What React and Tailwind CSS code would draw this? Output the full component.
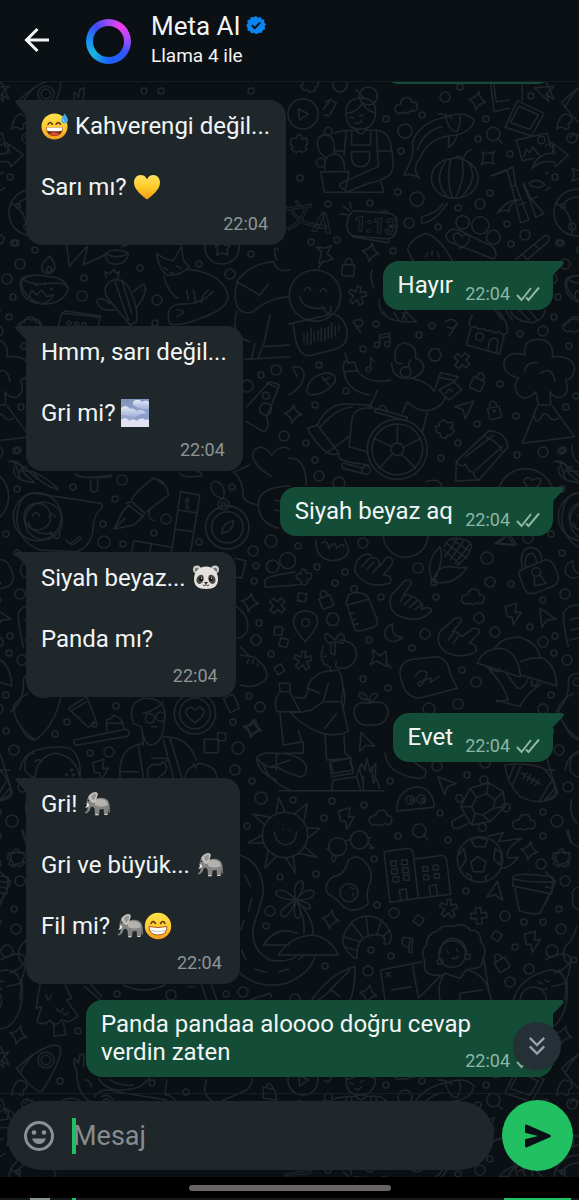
import { useState } from 'react';

const circles = [
    [340, 85, 7], [445, 97, 5], [460, 87, 3], [531, 96, 3], [422, 115, 3], [386, 119, 3], [405, 131, 7], [486, 119, 3],
    [478, 139, 3], [401, 151, 3], [572, 138, 5], [510, 154, 3], [300, 178, 3], [555, 177, 3], [398, 192, 3], [417, 199, 7],
    [490, 193, 3], [480, 204, 5], [458, 208, 3], [328, 204, 3], [370, 203, 3], [409, 223, 5], [438, 227, 3], [507, 224, 3],
    [525, 235, 5], [511, 244, 3], [311, 242, 3], [337, 240, 3], [393, 251, 3], [559, 243, 3], [558, 297, 3], [554, 317, 3],
    [376, 324, 3], [432, 326, 3], [419, 335, 3], [363, 349, 3], [520, 334, 3], [543, 331, 5], [569, 346, 3], [319, 365, 3],
    [346, 391, 3], [315, 405, 3], [500, 384, 3], [576, 396, 3], [566, 407, 3], [516, 416, 3], [477, 424, 3], [306, 443, 3],
    [315, 460, 3], [458, 443, 3], [441, 458, 3], [517, 455, 3], [543, 452, 5], [561, 451, 3], [319, 476, 5], [339, 483, 6],
    [298, 546, 3], [363, 543, 5], [528, 538, 5], [562, 553, 3], [487, 558, 6], [253, 551, 5], [256, 566, 3], [254, 581, 3],
    [317, 567, 3], [345, 572, 3], [335, 583, 3], [418, 568, 5], [490, 582, 5], [511, 584, 3], [565, 594, 5], [543, 600, 3],
    [381, 597, 3], [436, 597, 3], [479, 618, 5], [530, 627, 3], [495, 632, 5], [425, 634, 5], [259, 623, 3], [256, 640, 5],
    [369, 640, 3], [412, 648, 3], [543, 642, 5], [555, 636, 3], [554, 653, 3], [567, 660, 5], [271, 654, 3], [462, 670, 3],
    [476, 682, 5], [363, 679, 3], [388, 688, 3], [458, 704, 5], [429, 709, 6], [551, 695, 3], [543, 709, 5], [249, 696, 3],
    [260, 707, 5], [559, 750, 5], [437, 766, 5], [485, 763, 5], [252, 781, 3], [261, 798, 6], [293, 800, 3], [332, 801, 3],
    [364, 805, 3], [390, 781, 3], [467, 775, 3], [568, 787, 5], [440, 813, 3], [543, 812, 3], [557, 821, 6], [324, 818, 3],
    [247, 826, 3], [398, 836, 3], [448, 840, 3], [543, 836, 3], [541, 864, 5], [374, 859, 3], [316, 874, 3], [280, 877, 3],
    [565, 881, 5], [466, 891, 3], [377, 905, 3], [270, 911, 5], [394, 913, 5], [505, 916, 5], [559, 909, 3], [524, 922, 3],
    [543, 922, 3], [561, 929, 5], [266, 926, 3], [371, 950, 3], [391, 956, 3], [515, 947, 3], [552, 951, 6], [325, 966, 3],
    [368, 971, 5], [529, 969, 5], [510, 982, 5], [295, 999, 5], [243, 992, 5], [20, 264, 5], [35, 250, 3], [16, 243, 3],
    [84, 278, 3], [82, 296, 5], [140, 268, 3], [157, 300, 5], [199, 264, 3], [230, 274, 5], [251, 254, 3], [552, 279, 5],
    [155, 323, 3], [276, 370, 5], [261, 375, 3], [247, 386, 6], [284, 436, 5], [18, 450, 3], [73, 487, 3], [122, 480, 5],
    [115, 499, 3], [17, 489, 3], [103, 524, 3], [104, 542, 6], [123, 544, 3], [154, 533, 3], [166, 519, 5], [232, 487, 3],
    [199, 542, 3], [551, 534, 3], [271, 541, 6], [116, 706, 3], [67, 722, 3], [55, 734, 3], [90, 753, 3], [109, 752, 5],
    [551, 731, 3], [233, 722, 3], [238, 748, 6], [235, 770, 5], [144, 91, 3], [161, 91, 3], [251, 91, 3], [78, 1031, 3],
    [117, 994, 3], [171, 995, 5], [226, 994, 3], [60, 115, 3], [152, 117, 3], [186, 126, 3],
];

// Small motifs drawn around their own centre
const motifs = {
    spark: 'M0 -28Q5 -6 26 0Q6 6 0 28Q-6 6 -26 0Q-5 -6 0 -28Z',
    cloud: 'M-22 20Q-40 12 -30 -4Q-18 -10 -14 -8Q-10 -28 10 -24Q20 -20 20 -8Q38 -8 34 10Q28 24 14 16Q0 26 -8 18Z',
    cross: 'M-8 -24H8V-8H24V8H8V24H-8V8H-24V-8H-8Z',
    bolt: 'M-22 -22L12 -32L8 -4L26 -6L2 32L-2 8L-16 8Z',
    plane: 'M-20 -28L28 6L0 8L-14 30Z',
    square: 'M-12 -12H12V12H-12Z',
    lock: 'M-18 -8H18V22Q18 26 14 26H-14Q-18 26 -18 22ZM-10 -8V-20Q0 -34 10 -20V-8',
    puzzle: 'M-24 -16L-8 -18Q-6 -30 4 -28Q12 -22 8 -14L22 -18L26 0Q14 4 24 16L8 26Q2 14 -8 26L-24 16Q-12 6 -26 2Z',
    heart: 'M0 26Q-32 4 -26 -12Q-14 -30 0 -10Q14 -30 26 -12Q32 4 0 26Z',
    hexagon: 'M-10 -18H10L20 0L10 18H-10L-20 0Z',
    asterisk: 'M-5 -28H7L6 -10L22 -16L27 -5L12 3L22 18L12 26L1 12L-10 26L-20 18L-10 3L-27 -5L-22 -16L-6 -10Z',
    moon: 'M-6 -28Q-34 -18 -28 10Q-8 38 26 12Q-8 14 -6 -28Z',
    pin: 'M-14 -34L2 -10L24 -18L14 26L-12 2L-32 8L-16 -14ZM14 12L26 34',
    lens: 'M20 0A20 20 0 1 1 -20 0A20 20 0 1 1 20 0M13 14L26 28',
    smile: 'M-34 -12Q-24 -34 -14 -14M14 -12Q24 -34 34 -14M-46 8Q-30 48 34 34M22 30L40 50Q56 48 50 28',
};

// Each scene has its own origin and is drawn at three times its final size
const scenes = [
    {
        x: 289, y: 70,
        rounds: [[42, 132, 45], [238, 78, 27], [118, 184, 12], [95, 278, 13], [757, 210, 11], [865, 428, 70], [822, 408, 7], [850, 470, 10], [521, 457, 20], [574, 466, 26], [613, 502, 21], [78, 677, 77]],
        paths: [
            'M28 116L58 132L32 150Z',
            'M200 58L222 80M172 140Q165 85 216 84Q262 85 260 130Q255 175 215 178Q175 178 172 140M176 130Q205 125 220 100Q235 125 260 128M198 158Q208 166 218 152M182 142l12 2M212 138l10-3',
            'M200 178Q215 205 232 178M135 190Q150 182 200 181M235 181H262Q300 184 306 230Q318 280 308 305Q300 325 240 340L175 365M188 186V225H245V186M188 245H242V265Q238 290 215 290Q190 290 188 265ZM172 185L165 255M262 185L268 290L165 335Q140 345 165 358M262 243H306M135 243H165',
            'M95 305H180L168 367H106ZM168 367H285L275 335M108 300Q100 255 138 252Q168 255 166 300M108 262Q80 240 86 210Q100 185 125 200Q140 215 135 250',
            'M103 118L125 88L142 100L120 138L105 134M108 95l14-5',
            'M345 315Q380 250 370 220Q385 160 470 140Q530 120 555 150Q550 185 500 195Q420 200 395 260Q365 300 393 325Q370 310 345 315M470 140Q480 185 505 185Q520 150 510 135M480 200L478 232Q495 225 505 195M448 132Q470 130 490 145M385 240Q405 180 460 170',
            'M427 325A70 60 0 1 0 567 325A70 60 0 1 0 427 325M470 275Q430 330 475 380M485 270Q470 330 490 383M520 270Q530 325 500 383M540 280Q570 330 515 382M480 270L510 258L535 275M525 262Q528 245 545 240M460 378L495 385M462 400Q445 430 398 440V460Q440 455 475 400',
            'M605 40L615 125L660 115M615 45L622 95L660 90M700 90V42M685 92L765 130L728 198L648 172ZM690 108L748 135L722 178L665 158Z',
            'M700 272L682 210L775 190L785 232M700 272L735 265M705 260L712 238L722 248L732 232L750 255M730 295Q745 250 790 250L795 222L838 255L800 290L795 275Q750 270 730 295',
            'M605 318L672 292L680 345L720 450L695 458L668 350L655 302L605 318M680 345L665 350M705 340L725 385L765 430L740 442L722 388L702 345M720 340Q745 320 768 345Q745 360 722 345M625 430Q650 390 690 390Q660 400 660 425Q640 415 625 430M690 405L712 398M722 390L745 380',
            'M800 400Q850 420 850 495M822 405Q840 370 920 385',
            'M200 422L300 430Q328 436 324 465L320 490Q310 508 290 506L195 498Q172 490 174 462Q178 424 200 422M190 500L298 518L300 507M275 426Q290 415 298 430M155 432L175 434M162 408L180 422M183 396L187 415',
            'M470 500Q480 470 510 480L610 530Q630 550 615 568L480 515ZM515 535Q480 500 500 490Q512 485 518 500Q530 485 542 500Q545 520 515 535',
            'M372 572L356 540Q360 510 410 490Q450 500 490 572M410 560l8-12M428 555l2-12M450 560l-4-12M680 568L770 495Q785 500 778 515L715 568M700 552l12 14M735 523l15 14',
            'M250 600Q240 620 255 655M828 640Q830 620 880 615M828 640Q830 690 880 700M270 690Q270 720 285 735M620 722L640 750M650 722L670 750M350 722L340 750',
        ],
        marks: [['cloud', 350, 108, -10], ['spark', 565, 92, 10], ['lens', 613, 192, 0], ['spark', 597, 264, 45], ['puzzle', 30, 222, 0], ['plane', 770, 62, -40], ['asterisk', 205, 677, 10], ['lock', 178, 592, 5], ['pin', 105, 555, 60], ['spark', 245, 547, 10], ['puzzle', 62, 40, 20], ['spark', 868, 314, 45], ['smile', 78, 677, 5]],
    },
    {
        x: 289, y: 310,
        rounds: [[264, 105, 8], [295, 102, 8], [238, 178, 7], [572, 80, 12], [325, 418, 90], [325, 418, 76], [325, 418, 19], [350, 186, 16], [231, 480, 13], [710, 560, 84], [616, 303, 3], [880, 620, 72], [880, 620, 40]],
        paths: [
            'M0 42L130 12Q170 20 175 70Q175 105 140 118L60 137Q30 135 20 90L12 40',
            'M45 72v24M55 68v34M66 55v48M76 68v26M87 62v28M97 54v38M108 58v34M118 50v34M128 40v44M139 50v24M150 46v16',
            'M272 105V75L303 70V100M272 84L303 79M245 178V142L256 155M192 35L215 68M192 35Q215 20 222 38Q222 50 205 50M470 35Q490 20 505 40L480 78M475 50Q490 62 500 45',
            'M285 5Q290 30 340 35L382 35L350 5M315 8l15 25M340 8l15 25M665 5Q680 35 730 38Q765 30 768 0M690 0l30 30M720 0l25 30',
            'M550 15Q540 30 540 45Q550 55 560 50Q570 62 582 55Q595 66 605 60Q615 72 630 65Q645 80 655 68Q660 40 630 5M545 55L532 105L632 132L645 78M597 118L602 92Q612 78 627 90L622 128',
            'M740 245Q700 285 680 240Q675 215 690 205Q640 190 645 155Q660 120 708 135Q700 90 748 88Q795 90 790 140Q850 135 857 175Q855 205 830 210Q845 250 815 262Q795 265 783 245M707 185Q710 155 745 158M755 190Q790 165 798 215M740 245L748 285H785L783 245',
            'M745 288L700 400L857 380L790 288M735 315Q740 345 755 325Q765 300 780 320Q790 335 808 325',
            'M205 182Q235 225 305 210M165 185Q170 240 240 255M168 130L178 160L195 155M165 185Q158 160 172 152M165 185L205 182L198 160M320 150Q310 110 345 98Q385 105 380 145Q410 155 402 180Q390 200 365 205Q310 210 308 160M318 150Q325 165 340 160M365 150Q355 160 362 170',
            'M265 240Q255 270 240 290M355 275L340 310M355 275Q390 310 425 300Q460 290 470 260M365 205Q420 215 435 245M435 245L455 188L508 200L500 212L450 202M450 240L495 215L518 240L480 270ZM470 250Q485 230 490 245',
            'M258 295L355 322L352 332L256 305ZM270 295Q280 275 295 300M190 320Q200 290 250 295M85 345Q110 290 160 282Q220 280 250 290M55 355L85 345L150 430Q110 450 55 355M95 350Q140 295 190 290M190 320L180 410L235 425M110 430L180 380M150 430Q140 450 190 458L240 465M165 460L225 475M160 475L220 490M160 460V475M415 308L400 365',
            'M325 400V345M308 410L255 385M313 430L270 475M337 432L380 475M342 412L395 385',
            'M500 513L502 455L600 362Q650 365 657 410L570 510ZM502 455Q515 475 530 462Q540 490 555 485Q550 500 570 510M530 440L615 375M560 480L640 410M585 378Q630 395 640 425',
            'M55 235Q60 200 110 188Q145 190 138 215Q110 255 65 255Q50 250 55 235M100 200L120 225M122 202L104 212M0 255Q45 230 45 190Q40 165 10 172M10 172L25 200M0 445Q50 440 52 525',
            'M410 515Q455 500 460 535M795 455Q830 445 840 490Q870 515 870 518Q800 510 810 470M850 405Q845 440 870 460M728 540Q695 515 710 505Q722 500 730 512Q740 500 755 508Q760 525 728 540',
        ],
        marks: [['hexagon', 438, 134, 0], ['cross', 519, 152, 40], ['lock', 568, 215, 25], ['lock', 615, 300, -12], ['plane', 530, 298, 80], ['puzzle', 468, 357, 50], ['spark', 12, 312, 5], ['cloud', 855, 45, 0], ['plane', 652, 690, 150]],
    },
    {
        x: 240, y: 540,
        rounds: [[497, -15, 67], [98, 79, 19], [143, 62, 24], [342, 147, 10], [197, 248, 12], [889, 96, 13], [582, 127, 9], [1012, 427, 12]],
        paths: [
            'M228 0Q225 55 275 62Q320 60 326 30L315 0M245 10Q262 -5 268 28M270 20Q285 0 290 26M295 22Q308 5 312 20',
            'M580 125Q550 70 600 20Q615 60 580 125Q590 70 645 82Q670 85 682 82Q640 140 580 125M612 20Q620 -5 650 -5Q695 0 695 20Q680 60 650 75M612 30L660 72M620 10L680 55M640 0L690 35M615 50L650 0M630 60L672 0M645 70L692 10',
            'M75 138V120Q80 108 165 96M75 142L180 134M185 88Q200 85 198 100Q215 95 215 110Q212 120 202 118Q205 135 192 135Q180 132 183 120Q168 118 168 108Q172 98 183 102Z',
            'M345 95Q345 50 380 42Q395 40 395 55Q420 50 418 80L440 52Q460 50 458 70L430 105Q460 105 450 130Q380 150 345 95M365 80L388 55M382 88L402 65M398 98L416 78',
            'M318 190L325 165Q350 150 378 165L388 177L320 196ZM322 196L345 270Q350 278 400 262Q415 255 412 240L388 180M328 222l15-4M334 240l12-3M340 255l15-4',
            'M470 225Q440 200 455 165L495 122Q512 115 515 130L490 165Q520 160 548 195L545 207Q575 198 574 213Q540 255 470 225M480 185L495 165M492 195L515 172M508 202L532 182M525 208L545 195',
            'M615 335Q585 310 600 275L645 235Q660 228 665 242L638 275Q650 272 665 290L700 265Q720 262 718 278L688 308Q715 315 708 335Q660 360 615 335M625 300L640 280M640 310L655 288',
            'M196 305Q160 265 160 245Q165 212 197 212Q232 215 233 245Q232 265 196 305Z',
            'M850 140L838 105Q835 92 850 87L915 60Q940 55 955 110Q955 130 940 138L885 160Q860 165 850 140M848 88Q835 30 870 22Q905 25 905 62M858 84Q850 45 873 40Q888 42 890 70M882 108L885 138L918 130L900 105',
            'M480 400Q480 365 520 358L590 350Q625 355 630 400L652 445L540 474Q490 475 480 400M525 410Q545 380 560 398Q560 420 540 438Q520 430 555 420Q580 405 570 428L598 410',
            'M712 370Q730 325 785 325Q835 335 842 412ZM765 322Q790 290 840 292Q895 310 900 352M842 365Q870 350 910 355Q950 380 950 438L845 405M740 380Q790 430 805 480L770 485M770 480L840 500Q850 470 905 430M800 402L832 445Q850 450 865 415M740 380Q760 395 775 395L778 385M875 420V435Q885 445 895 425',
            'M265 310Q245 285 262 280L285 300L300 280Q320 285 310 310L285 305ZM272 308V340L285 345V310M300 300Q350 305 350 345Q340 385 305 385Q280 385 290 365M250 318L243 350L252 372L270 380L272 395M252 350l8-2',
            'M250 395Q210 410 202 445L240 460M250 395L295 390Q315 420 305 485L325 575Q290 590 245 580Q180 555 150 515L185 517L215 510L250 485H305M265 430L250 485M205 450L195 475L165 472M308 440Q320 470 310 500M290 520L255 565',
            'M118 430H150V455H120ZM118 460Q100 480 110 515H180L150 458M120 520L130 615M175 570L185 605L130 615L190 605V640L130 640M255 585L260 660L335 655L315 640L312 585M270 665L330 655L340 690L280 700ZM50 655Q60 635 110 640Q180 640 200 680Q200 710 180 710Q140 700 110 680Q80 690 50 655Q55 700 110 720M95 680L150 660M110 640L108 690',
            'M388 490Q340 480 342 520Q350 560 390 555Q440 560 445 515Q440 475 388 490L378 465Q352 450 358 470Q370 480 380 480M388 485Q390 455 412 462Q410 480 388 485',
            'M0 435Q50 450 80 415Q85 380 40 350L0 345M0 320L15 335L30 350M22 370l4-12M38 372l2-14M52 378l2-10',
            'M985 320Q970 260 970 220Q980 195 1017 195M990 240l27-8M995 270l20-5M990 300l27-6M948 515Q990 480 985 420Q990 400 1017 400M975 555Q990 595 1017 600M975 690Q985 640 1017 640',
            'M350 705L365 670L375 690L380 655L390 695L408 670L405 715M435 640Q440 700 530 715Q560 720 557 690L520 665',
        ],
        marks: [['cross', 112, 197, 42], ['spark', 30, 187, 10], ['square', 186, 172, 8], ['lock', 256, 178, -20], ['hexagon', 278, 238, 0], ['square', 115, 273, 10], ['square', 131, 308, 15], ['moon', 463, 280, 0], ['pin', 420, 358, -15], ['asterisk', 188, 362, 5], ['square', 118, 388, -30], ['cloud', 698, 172, 0], ['bolt', 818, 222, 0], ['plane', 920, 232, 0], ['moon', 1005, 90, 0], ['spark', 36, 565, 10], ['plane', 378, 608, 10], ['plane', 792, 2, 150]],
    },
    {
        x: 240, y: 760,
        rounds: [[135, 225, 68], [293, 260, 27], [358, 240, 27], [511, 120, 13], [544, 118, 13], [732, 60, 12], [658, 115, 11], [798, 143, 12], [727, 202, 12], [720, 298, 68], [327, 398, 27], [637, 582, 40], [600, 605, 8], [683, 590, 8], [880, 722, 40], [516, 120, 5], [549, 120, 5], [1002, 600, 8]],
        paths: [
            'M118 92H432M70 10Q80 60 150 90M270 10L275 50L340 40L330 5M280 60L350 50L362 90M280 60L275 88M370 50V90M395 20L400 70L410 55L418 85M357 25L368 60',
            'M108 160L116 112L135 155M165 160L202 130L192 180M200 205L240 205L203 235M192 258L230 292L175 280M160 290L166 338L138 294M108 290L75 325L85 270M70 250L25 248L68 225M75 195L38 162L92 172M103 215Q110 255 140 254Q168 250 170 215M128 208h2M148 211h2',
            'M318 242L332 238M268 262l-10 6M280 285Q270 300 282 306Q288 300 288 288M385 235L395 232M385 250L402 264L388 264',
            'M470 153Q470 90 530 80Q580 85 583 142Z',
            'M662 140L690 85L745 68L790 95L795 140L750 185L695 195ZM695 140L710 112L740 100L765 120L760 145L728 165L705 160ZM690 85L710 112M745 68L740 100M790 95L765 120M795 140L760 145M750 185L728 165M695 195L705 160M662 140L695 140M670 165L635 185Q635 210 655 205L685 190',
            'M795 15Q860 5 910 25Q950 60 947 110Q900 140 840 110Q800 70 795 15M845 40L900 72M850 56l10-18M862 62l10-18M874 70l10-18M886 76l10-18M808 55L822 18M818 75L842 20M898 125L935 62M912 122L945 85',
            'M712 290L738 305L730 335L700 335L692 308ZM693 240L715 232L742 240L735 260L705 260ZM657 285L672 265L678 300L662 325M765 265L785 280L780 315L762 298ZM680 340L695 350V362M745 345L735 352L740 362M745 228L790 218L775 245L845 235Q790 270 805 295L835 292Q810 325 785 325',
            'M432 275L505 265Q518 268 520 280L535 415L450 427ZM525 297L608 286Q618 290 620 300L632 403L535 415M452 303h17v15h-17ZM485 299h17v15h-17ZM455 327h17v15h-17ZM488 323h17v15h-17ZM459 350h17v15h-17ZM491 346h17v15h-17ZM548 320h15v14h-15ZM580 316h15v14h-15ZM551 345h15v14h-15ZM583 341h15v14h-15ZM482 420L478 390L498 386L502 418M572 408L568 378L588 374L592 406',
            'M325 300Q350 280 375 305Q400 330 392 365Q375 395 385 430Q350 465 310 440Q290 415 262 400Q250 370 280 350Q315 345 325 300M330 382l12 6M340 400v8',
            'M820 350Q830 335 940 352L935 402L818 378ZM825 385L838 452Q870 465 900 460L928 402M822 358Q880 370 940 365',
            'M168 420Q155 370 185 362Q200 380 168 420Q200 380 222 395Q225 420 168 420Q220 430 210 445Q190 450 168 420Q190 460 175 475Q155 470 168 420Q145 475 128 470Q105 455 168 420Q100 415 108 395Q130 380 168 420M180 450Q195 480 192 520M190 445Q220 480 220 525M70 555Q110 495 172 520M70 555H145M115 585Q150 530 215 525Q270 530 295 585Z',
            'M0 285Q70 310 70 400Q60 440 40 500Q30 570 90 600Q140 610 170 588M0 640Q60 690 140 670Q210 640 225 590M15 345L32 380M35 415L25 455M45 628L80 638M115 635L145 628M175 600l15-12M2 510L12 482M5 570L18 600',
            'M345 595Q300 560 310 530Q330 470 385 467Q440 475 455 530Q450 560 432 550Q440 530 420 525Q380 520 360 545Q350 565 350 595ZM310 530L360 545M335 490L370 535M378 468L385 527M425 480L410 523M450 510L428 530M312 560L352 572',
            'M518 535L515 578L506 576L510 535M518 535L490 532Q478 560 508 562',
            'M215 720Q270 640 345 620Q345 690 330 720M235 720L275 690L300 710M270 690L330 630M422 630L548 605M422 630L435 720M517 612L535 712M455 690L515 680M438 637l14 12m0-12l-14 14',
            'M600 645Q545 650 555 605Q540 570 560 555Q560 520 590 515Q610 490 640 500Q670 485 690 510Q725 510 722 545Q745 570 728 595Q730 630 690 625M600 580Q605 535 640 535Q675 540 680 575M622 572l4 8M650 568l4 6M635 595Q650 600 655 588M535 715L600 650L615 640L660 655L680 628Q740 650 745 690L755 720M600 720Q590 670 615 640M660 720V700L725 690M730 590L748 700',
            'M820 720Q840 650 930 630Q975 630 978 680L975 720M895 665q5 8 12 4M915 660q5 8 12 4M902 685q8 8 20 0M960 635L995 605M1010 500Q1000 540 975 560Q965 600 985 610M1017 380Q990 390 1000 410Q990 440 1017 450M995 120Q985 160 1010 190M980 210Q985 250 1017 262',
        ],
        marks: [['bolt', 318, 175, 0], ['cloud', 421, 175, 0], ['cloud', 851, 188, 0], ['plane', 620, 72, -15], ['lens', 538, 212, 0], ['spark', 868, 272, 10], ['puzzle', 964, 295, 0], ['plane', 770, 398, 40], ['spark', 272, 478, 10], ['square', 536, 481, 35], ['asterisk', 625, 446, 5], ['cross', 716, 467, -5], ['square', 770, 528, 30], ['bolt', 875, 545, 0], ['lock', 782, 607, -30], ['spark', 385, 702, 10]],
    },
    {
        x: 0, y: 230,
        rounds: [[147, 118, 8], [666, 50, 52], [797, 537, 18], [798, 497, 10], [207, 280, 6], [230, 283, 6], [252, 285, 6], [110, 165, 2], [135, 160, 2], [155, 178, 2]],
        paths: [
            'M65 145Q60 200 125 222Q190 225 205 175Q190 140 150 140Q90 130 65 145Q100 170 150 160Q195 155 205 175M148 78Q115 110 130 125Q150 140 165 115Q165 95 148 78M95 212Q85 190 95 182L110 195L125 180L140 200L160 195Q150 215 130 220',
            'M390 285L320 200Q305 165 340 150Q375 145 390 180Q415 230 410 275L390 285M345 155L385 270M365 150L395 250M318 145L315 125L330 132L340 118L350 130L358 125L352 148M290 215Q300 195 330 220M290 215Q300 245 345 240M400 185L430 162Q445 175 425 210L408 235',
            'M200 45L208 108L260 50M250 105L315 75M262 50L250 105M315 70Q350 50 386 70Q350 90 315 70Q320 105 350 103Q380 100 386 70M365 50L380 45',
            'M470 70L492 85L520 92L545 50L550 90L567 110Q540 140 500 135Q475 115 470 70M492 140Q505 190 535 205M565 118Q670 130 685 200Q680 240 600 265Q540 290 510 282Q490 225 545 222Q600 225 640 185M560 180L565 210M580 180L588 218M625 180Q605 195 605 220M530 240Q570 240 530 260M490 112l14 8M530 108l14 8M510 128l12 2',
            'M645 48L658 45L666 30L674 45L690 48L680 60L684 75L666 68L650 75L654 60Z',
            'M710 155Q750 100 820 95Q830 130 870 120M710 155L780 195L805 162M705 200Q710 260 760 245Q800 205 870 200M710 245Q690 320 750 335M810 255L790 350L870 345M765 340L755 385M785 355L775 385M735 388L870 380M835 60Q815 40 830 90M705 200Q705 175 712 160',
            'M175 288L185 250L300 262L295 288M185 250L195 243L302 258M60 288Q70 260 95 270Q120 262 125 288',
            'M805 460L835 475L800 560Q810 600 790 605L740 575M805 460L740 530M800 460Q805 450 838 465L835 475M815 740Q750 700 760 665Q785 635 815 675Q840 640 870 658',
            'M30 693Q70 700 110 748M45 700L62 748M60 720L80 710M230 735Q250 748 335 740M705 725L750 705',
        ],
        marks: [],
    },
    {
        x: 0, y: 470,
        rounds: [[131, 153, 56], [682, 172, 65], [682, 172, 47], [671, 103, 16], [671, 103, 6]],
        paths: [
            'M50 150Q55 75 95 68L300 100Q315 105 300 120Q280 135 278 190Q265 235 230 245L120 240Q60 220 50 150M198 210L210 222L240 198M215 225L222 222L245 205',
            'M342 178L365 130L385 105L430 140L400 165ZM342 178L375 145M378 100L395 95L435 130L420 145M395 90Q400 70 460 25Q500 30 505 75L440 125M450 115Q440 150 465 152M470 28L500 50',
            'M60 5Q90 0 110 10Q150 30 175 58Q120 45 100 5M225 10Q235 30 335 15M272 28V60Q283 72 293 60V28M540 10Q545 25 605 18Q608 5 590 5',
            'M542 65L600 75L572 243M542 65L515 243M535 120L590 128M525 178L582 185M395 243L402 212L515 232M455 222L450 243',
            'M665 190Q670 155 700 152Q700 185 665 190ZM650 118L658 115M695 112L690 108M632 50Q635 30 655 35Q680 55 670 85Q640 85 632 50',
            'M700 5Q730 30 730 80Q735 95 770 105M870 48Q770 50 775 110Q780 160 835 175M825 90l15 4M825 120l12 2M705 265L738 272L725 325L710 322M710 410Q750 440 742 480Q735 500 712 505',
        ],
        marks: [['smile', 131, 153, 5]],
    },
    {
        x: 0, y: 690,
        rounds: [[450, 85, 14], [482, 80, 14], [585, 70, 62], [585, 70, 46], [200, 255, 3], [215, 240, 3], [220, 255, 3], [283, 103, 8]],
        paths: [
            'M40 50Q60 20 85 10M40 50Q45 110 105 150Q165 110 185 10M100 10Q130 35 160 10M205 55L260 20L290 95L265 112ZM215 62L260 35',
            'M222 150L375 118Q395 120 385 138L235 165Q218 165 222 150M320 128V90Q340 85 340 75Q370 85 372 117M322 100H365',
            'M400 100Q380 40 430 25Q490 20 495 70L490 120Q480 165 450 165Q430 160 425 110L400 100M430 70Q470 60 490 35M455 110l15 0M425 110L430 165M360 262Q355 180 410 165L430 160M490 140Q560 140 582 195L590 210M415 165L430 262M490 150L520 262M510 145L545 262M455 205H500V215M362 245H415M445 262Q435 230 465 222Q480 230 490 215Q515 240 475 262',
            'M75 240Q70 190 110 180Q160 165 210 175Q245 200 240 262M105 262Q110 200 165 190Q225 195 240 262M75 240Q85 260 105 262M105 215q12 -12 20 2M613 148H655V188H613ZM653 128H677V152H653ZM555 262Q560 230 600 220Q650 230 650 262M580 220L590 235',
            'M670 25L700 12L718 55L690 68ZM0 190L38 310L0 330M0 240l28 0M70 420Q75 440 78 460M30 495L50 485L75 490M30 495L40 525L75 515',
            'M0 545L32 575L0 645M0 590l20 5M0 810Q55 780 75 800Q80 840 60 880L20 890M30 850l15-10',
        ],
        marks: [['heart', 585, 72, 0], ['spark', 760, 115, 15], ['bolt', 300, 240, 0]],
    },
    {
        x: 0, y: 980,
        rounds: [[138, 240, 24], [138, 240, 14]],
        paths: [
            'M120 15L108 85L125 80L110 125Q135 140 150 120Q165 145 185 120L205 125L235 110L200 60L215 55L195 15M162 130V168L198 165L190 128M138 45q10 30 15 0M170 85q10 20 20 0M190 100q10 10 15 -5',
            'M65 0Q75 80 40 125Q20 150 0 145M255 20L300 60M270 10L305 50M370 15Q430 45 495 15M605 15L620 60M635 15L650 60M565 20h20M750 60L810 40L815 50',
            'M50 265Q100 215 150 198Q180 190 182 210Q180 250 125 335Q105 340 50 265M60 300Q40 305 35 345Q50 335 60 345Q75 350 70 330Q90 320 75 305ZM100 225Q80 240 60 280',
            'M230 270Q215 240 225 235L235 250L240 225L252 222L250 260M230 270Q230 340 270 365M255 300Q270 300 275 320M295 295Q330 350 420 320L450 295M330 300Q360 320 400 315M285 350Q300 320 350 335L500 360M500 300L495 345Q510 340 525 360M620 300Q600 350 650 370L740 330Q760 310 755 295M790 320L825 330L830 360L790 355ZM800 318Q805 300 820 325M180 365Q220 345 240 365M75 370Q90 350 105 370M0 395L20 385L30 420M0 480L10 475M15 520L0 530',
            'M305 350q20 -10 35 10M310 360q15 -8 25 8',
        ],
        marks: [['spark', 55, 165, 15], ['plane', 5, 235, 30]],
    },
];

function Doodles() {
    return (
        <g id="doodles" fill="none" stroke="#20262a" strokeWidth="1.5" strokeLinecap="round" strokeLinejoin="round">
            {circles.map(([cx, cy, r]) => <circle key={`${cx}-${cy}`} cx={cx} cy={cy} r={r} />)}
            {scenes.map((s) => (
                <g key={`${s.x}-${s.y}`} transform={`translate(${s.x} ${s.y}) scale(0.3333)`} strokeWidth="4.5">
                    {s.paths.map((d) => <path key={d} d={d} />)}
                    {s.rounds.map(([cx, cy, r], i) => <circle key={i} cx={cx} cy={cy} r={r} />)}
                    {s.marks.map(([name, x, y, turn], i) => (
                        <path key={i} d={motifs[name]} transform={`translate(${x} ${y}) rotate(${turn})`} />
                    ))}
                </g>
            ))}
            <g fontFamily="Roboto, sans-serif" fontWeight="700" strokeWidth="1">
                <text x="353" y="231" fontSize="22" transform="rotate(5 353 231)">1:13</text>
                <text x="312" y="231" fontSize="28" transform="rotate(8 312 231)">A</text>
                <text x="286" y="228" fontSize="30" fontFamily="Noto Sans CJK SC, sans-serif" fontWeight="400" transform="rotate(-8 286 228)">文</text>
                <text x="184" y="508" fontSize="16" fontWeight="400" transform="rotate(8 184 508)">t</text>
            </g>
        </g>
    );
}

// Tile repeats every 545 x 966, the extra copies cover what crosses its edges
function Wallpaper() {
    return (
        <svg className="absolute inset-0 w-full h-full" aria-hidden="true">
            <defs>
                <Doodles />
                <pattern id="wallpaper" width="545" height="966" patternUnits="userSpaceOnUse">
                    <use href="#doodles" />
                    <use href="#doodles" x="-545" />
                    <use href="#doodles" y="-966" />
                    <use href="#doodles" x="-545" y="-966" />
                </pattern>
            </defs>
            <rect width="100%" height="100%" fill="url(#wallpaper)" />
        </svg>
    );
}

function Emoji({ label, children }) {
    return (
        <svg viewBox="0 0 28 28" role="img" aria-label={label} className="inline-block w-7 h-7 align-middle -mt-1">
            {children}
        </svg>
    );
}

function FaceGradient({ id }) {
    return (
        <linearGradient id={id} x1="0" y1="0" x2="0" y2="1">
            <stop offset="0" stopColor="#ffe34a" />
            <stop offset="0.6" stopColor="#fdc62e" />
            <stop offset="1" stopColor="#f29a1f" />
        </linearGradient>
    );
}

function SweatSmile() {
    return (
        <Emoji label="sweat smile">
            <defs><FaceGradient id="sweatFace" /></defs>
            <circle cx="13.5" cy="14.5" r="13" fill="url(#sweatFace)" />
            <path d="M7 12.5q2-4 4.5-.2M15 12.3q2.500-3.800 4.500 0" fill="none" stroke="#5d3512" strokeWidth="1.5" strokeLinecap="round" />
            <path d="M5 15.5h17q-.5 8.500-8.500 8.500t-8.500-8.500z" fill="#6f2d12" />
            <path d="M5.5 15.5h16l-.6 3.300q-7.400 1-14.800 0z" fill="#fff" />
            <path d="M8.5 22q5-3.500 10 0-4.500 3.500-10 0z" fill="#e8493f" />
            <path d="M23.7 1.5q-3.700 5-3.300 7 .6 3 3.300 3t3.300-3q.3-2-3.300-7z" fill="#3fa7ee" />
            <path d="M22 7.500q0 2 1.500 2.500" fill="none" stroke="#bfe4fc" strokeLinecap="round" />
        </Emoji>
    );
}

function YellowHeart() {
    return (
        <Emoji label="yellow heart">
            <defs>
                <linearGradient id="heartFill" x1="0" y1="0" x2="0" y2="1">
                    <stop offset="0" stopColor="#ffe063" />
                    <stop offset="0.5" stopColor="#fdcb25" />
                    <stop offset="1" stopColor="#f59b1c" />
                </linearGradient>
            </defs>
            <path d="M14 26.5C9 22.5 1 17 1 9.5 1 5 4 2 7.5 2c3 0 5.300 1.600 6.500 4.200C15.200 3.600 17.500 2 20.500 2 24 2 27 5 27 9.500 27 17 19 22.500 14 26.500z" fill="url(#heartFill)" />
        </Emoji>
    );
}

function Fog() {
    return (
        <Emoji label="fog">
            <defs>
                <linearGradient id="fogSky" x1="0" y1="0" x2="0" y2="1">
                    <stop offset="0" stopColor="#8093bb" />
                    <stop offset="1" stopColor="#a3b1da" />
                </linearGradient>
                <linearGradient id="fogCloud" x1="0" y1="0" x2="0" y2="1">
                    <stop offset="0" stopColor="#e4eaf6" />
                    <stop offset="1" stopColor="#9dadd5" />
                </linearGradient>
            </defs>
            <path d="M0 0h28v28H0z" fill="url(#fogSky)" />
            <path d="M12 3c2-3 7-3 9 0 3-2 6-1 7 0v7c-5 1-9 0-12-2-3-1-5-3-4-5z" fill="url(#fogCloud)" />
            <path d="M0 9c3-3 8-2 9 1 3-1 5 0 6 2 4-2 8-1 10 2 0 4-6 5-10 4-5 0-11-2-15-2z" fill="url(#fogCloud)" />
            <path d="M14 19c3-4 9-5 14-4v9H14z" fill="#8c9dcb" />
            <path d="M0 21c3-3 7-2 8 1 2-2 6-2 8 0 2-3 7-3 8-1 2-1 3-1 4 0v7H0z" fill="#e3e2f4" />
        </Emoji>
    );
}

function Panda() {
    return (
        <Emoji label="panda">
            <circle cx="5" cy="5.5" r="4" fill="#cfcdc8" />
            <circle cx="23" cy="5.5" r="4" fill="#cfcdc8" />
            <circle cx="5" cy="6" r="2.2" fill="#777570" />
            <circle cx="23" cy="6" r="2.2" fill="#777570" />
            <path d="M14 2.5c7 0 12 5 12 12.500 0 7-4 10-12 10S2 22 2 15C2 7.500 7 2.500 14 2.500z" fill="#e3e2df" />
            <path d="M10.500 11q-4-1-6 4-.5 4.500 3 5 3-.5 4-4 .6-4-1-5zM17.500 11q4-1 6 4 .5 4.500-3 5-3-.5-4-4-.6-4 1-5z" fill="#4a4744" />
            <circle cx="9" cy="15" r="2" fill="#0d0c0c" />
            <circle cx="19" cy="15" r="2" fill="#0d0c0c" />
            <circle cx="9.5" cy="14.3" r=".7" fill="#fff" />
            <circle cx="19.5" cy="14.3" r=".7" fill="#fff" />
            <path d="M12 18h4l-2 2.500z" fill="#1c1a1a" />
            <path d="M11 21q2 1.500 3-.5 1 2 3 .5" fill="none" stroke="#3b3836" />
        </Emoji>
    );
}

function Elephant() {
    return (
        <Emoji label="elephant">
            <path d="M10 11q4-4 10-3 6 1 6.500 7l.5 7-1 1-.6-5-.4 7h-4l-.4-6-4 .5-.6 6H12l-.4-7-2-2-2 1q-1 5-5 6l-1-1q3-1 3-5l-1-5q0-5 5-7z" fill="#858381" />
            <path d="M12 10q5-2 10 0 3 2 3 5-6 3-13 0z" fill="#b4b2af" />
            <path d="M5 7q3-5 8-5 3 1 1 5-1 5-3 6-3 0-4-3z" fill="#c3c0bd" />
            <path d="M8 6q2-2.500 4.500-2.500 1 1 0 4-1 2-2 3-1.500-.5-2.500-4.500z" fill="#989593" />
            <path d="M3.500 13q1 3-1.500 5 4.500-.5 4-4z" fill="#eeeae0" />
            <circle cx="5.3" cy="10.5" r=".8" fill="#191818" />
            <path d="M12.500 24.500h2.500M21.500 24.500h2.500" stroke="#dcd9d4" />
        </Emoji>
    );
}

function Grin() {
    return (
        <Emoji label="grin">
            <defs><FaceGradient id="grinFace" /></defs>
            <circle cx="14" cy="14" r="13.2" fill="url(#grinFace)" />
            <path d="M7 11.500q2-4 4.500 0M16.500 11.500q2.500-4 4.500 0" fill="none" stroke="#5d3512" strokeWidth="1.5" strokeLinecap="round" />
            <path d="M5 14.500q9 2 18 0 0 8.500-9 8.500t-9-8.500z" fill="#fff" stroke="#a75f1c" />
            <path d="M6 18.500q8 2 16 0" fill="none" stroke="#b9b4ac" strokeWidth=".8" />
        </Emoji>
    );
}

function Ticks() {
    return (
        <svg viewBox="0 0 24 16" className="w-6 h-4" fill="none" stroke="currentColor" strokeWidth="2" role="img" aria-label="Delivered">
            <path d="M1 9l4.500 5L15 2M10 11.500l2.500 2.500L23 1.500" />
        </svg>
    );
}

function Incoming({ children }) {
    return (
        <li className="relative self-start flex flex-col rounded-2xl rounded-tl-none bg-[#1f272a] pt-3 pb-[11px] pl-[15px] pr-4">
            <svg viewBox="0 0 12 15" className="absolute top-0 -left-[11px] w-3 h-[15px]" fill="#1f272a" aria-hidden="true">
                <path d="M12 0H2Q-1 1 1 3L12 15z" />
            </svg>
            <div className="flex flex-col gap-[33px]">{children}</div>
            <time className="self-end mt-[13px] mr-[2px] text-[18px] leading-5 text-[#8d9497]">22:04</time>
        </li>
    );
}

function Outgoing({ children }) {
    return (
        <li className="relative self-end flex flex-col max-w-[467px] rounded-2xl rounded-tr-none bg-[#144d37] pt-[10px] pb-[11px] pl-[15px] pr-[13px]">
            <svg viewBox="0 0 12 15" className="absolute top-0 -right-[11px] w-3 h-[15px]" fill="#144d37" aria-hidden="true">
                <path d="M0 0h10q3 1 1 3.500L0 15z" />
            </svg>
            <p>
                {children}
                <span className="inline-block w-[87px]" />
            </p>
            <span className="self-end -mt-[15px] -mb-[5px] flex items-center gap-[6px] text-[#8fb5a5]">
                <time className="text-[18px] leading-5">22:04</time>
                <Ticks />
            </span>
        </li>
    );
}

export default function App() {
    const [message, setMessage] = useState('');

    return (
        <div className="h-screen flex flex-col overflow-hidden bg-[#0b1014] text-[#f2f5f6] text-[24px] leading-7" style={{ fontFamily: 'Roboto, sans-serif' }}>
            {/* Header */}
            <header className="relative z-10 h-[82px] shrink-0 flex items-center bg-[#0b1014] border-b border-[#161c20] pl-6">
                <button type="button" aria-label="Back" className="shrink-0 mb-[2px]">
                    <svg viewBox="0 0 26 26" className="w-[26px] h-[26px]" fill="none" stroke="currentColor" strokeWidth="3">
                        <path d="M25 13H3M13.500 2L2.500 13l11 11" />
                    </svg>
                </button>
                <div className="ml-9 mt-[2px] shrink-0 w-[45px] h-[45px] rounded-full bg-[conic-gradient(#a04bf5,#f03cf0_35deg,#b04bf8_80deg,#2f55ff_125deg,#1b62ff_180deg,#16b8dd_230deg,#1a8cf2_275deg,#3d49f5_320deg,#a04bf5)] p-[7px]">
                    <div className="w-full h-full rounded-full bg-[#0b1014]" />
                </div>
                <div className="ml-5 -mt-[2px]">
                    <div className="flex items-center gap-[5px]">
                        <h1 className="text-[26px] leading-8">Meta AI</h1>
                        <svg viewBox="-1 0 22 21" className="w-5 h-[19px]" role="img" aria-label="Verified">
                            <path d="M10 0l2.200 1.900 2.800-.9 1.300 2.600 2.900.6-.1 3 2.100 2.100-1.700 2.400.6 2.900-2.700 1.200-.8 2.800-3-.1L10 20.200l-2.400-1.700-2.900.8-1.400-2.700-2.800-.6.2-3L-.8 10.300 1 7.900l-.6-2.900 2.800-1.100L4.300 1.200l2.900.3z" fill="#0a84f0" />
                            <path d="M5.500 10.200l3.200 3.200 6-6.400" fill="none" stroke="#0b1014" strokeWidth="2.2" />
                        </svg>
                    </div>
                    <p className="text-[19px] leading-7">Llama 4 ile</p>
                </div>
            </header>

            <div className="flex-1 min-h-0 flex flex-col">
                <Wallpaper />

                {/* Messages */}
                <main className="relative flex-1 min-h-0 flex flex-col justify-end overflow-hidden px-[26px] pb-4">
                    <ol className="flex flex-col gap-4">
                        <li className="self-end w-[170px] h-[49px] rounded-2xl bg-[#144d37]" />
                        <Incoming>
                            <p><SweatSmile /> Kahverengi değil...</p>
                            <p>Sarı mı? <YellowHeart /></p>
                        </Incoming>
                        <Outgoing>Hayır</Outgoing>
                        <Incoming>
                            <p>Hmm, sarı değil...</p>
                            <p>Gri mi? <Fog /></p>
                        </Incoming>
                        <Outgoing>Siyah beyaz aq</Outgoing>
                        <Incoming>
                            <p>Siyah beyaz... <Panda /></p>
                            <p>Panda mı?</p>
                        </Incoming>
                        <Outgoing>Evet</Outgoing>
                        <Incoming>
                            <p>Gri! <Elephant /></p>
                            <p>Gri ve büyük... <Elephant /></p>
                            <p>Fil mi? <Elephant /><Grin /></p>
                        </Incoming>
                        <Outgoing>Panda pandaa aloooo doğru cevap verdin zaten</Outgoing>
                    </ol>
                    <button type="button" aria-label="Scroll to bottom" className="absolute right-[18px] bottom-[23px] w-12 h-12 rounded-full bg-[#252f36] shadow-md flex items-center justify-center">
                        <svg viewBox="0 0 20 22" className="w-[18px] h-5" fill="none" stroke="#99a2a7" strokeWidth="2.6">
                            <path d="M2 2l8 8 8-8M2 11.500l8 8 8-8" />
                        </svg>
                    </button>
                </main>

                {/* Composer */}
                <form className="relative shrink-0 flex items-center gap-2 border-t border-[#181e22] pt-[6px] pl-[7px] pr-[6px] pb-[6px]" onSubmit={(e) => e.preventDefault()}>
                    <div className="flex-1 min-w-0 h-[69px] rounded-full bg-[#1f272a] flex items-center pl-4">
                        <button type="button" aria-label="Emoji" className="shrink-0">
                            <svg viewBox="0 0 32 32" className="w-8 h-8" fill="none" stroke="#8b9296" strokeWidth="3">
                                <circle cx="16" cy="16" r="13.5" />
                                <circle cx="11" cy="12.5" r="2.3" fill="#8b9296" stroke="none" />
                                <circle cx="21" cy="12.5" r="2.3" fill="#8b9296" stroke="none" />
                                <path d="M9 18.500h14q-2 5.500-7 5.500t-7-5.500z" fill="#8b9296" stroke="none" />
                            </svg>
                        </button>
                        <span className="shrink-0 ml-[17px] w-1 h-9 bg-[#21c063]" />
                        <input
                            type="text"
                            aria-label="Mesaj"
                            placeholder="Mesaj"
                            value={message}
                            onChange={(e) => setMessage(e.target.value)}
                            className="flex-1 min-w-0 h-12 -ml-[3px] mr-6 bg-transparent text-[27px] placeholder:text-[#868d91] caret-[#21c063] outline-none"
                        />
                    </div>
                    <button type="submit" aria-label="Send" className="shrink-0 w-[71px] h-[71px] rounded-full bg-[#21c063] flex items-center justify-center">
                        <svg viewBox="0 0 28 24" className="w-7 h-6" fill="#0b1014">
                            <path d="M1 2Q1 0 3 .7L26 10.700q2 1.300 0 2.600L3 23.300Q1 24 1 22v-6.800L14 12 1 8.800z" />
                        </svg>
                    </button>
                </form>
            </div>

            {/* Navigation bar */}
            <div className="relative shrink-0 h-[21px] bg-black flex items-center justify-center">
                <div className="w-[202px] h-[6px] rounded-full bg-[#686464]" />
            </div>
            <div className="relative shrink-0 h-[2px] flex bg-[#141a1d] pl-[30px] pr-2">
                <div className="w-5 bg-[#8b9296]" />
                <div className="ml-[22px] w-1 bg-[#21c063]" />
                <div className="ml-auto w-[67px] bg-[#21c063]" />
            </div>
        </div>
    );
}
